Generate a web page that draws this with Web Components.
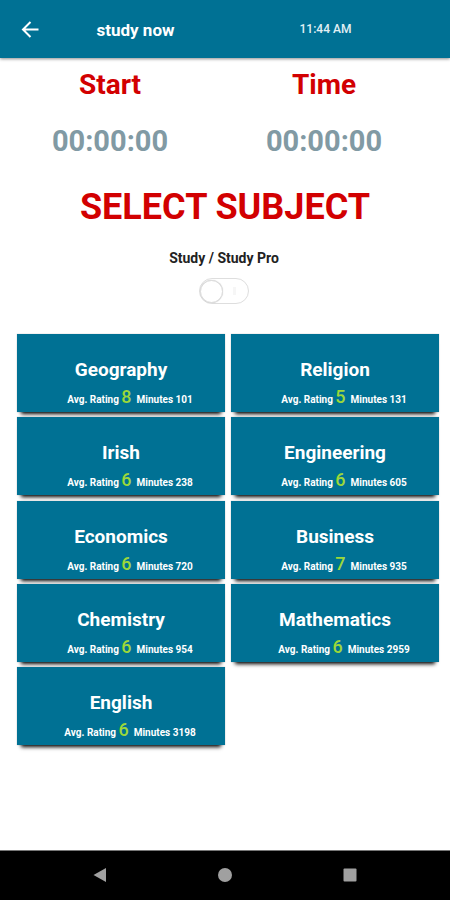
<!DOCTYPE html>
<html lang="en">
<head>
<meta charset="utf-8">
<meta name="viewport" content="width=device-width, initial-scale=1">
<title>study now</title>
<style>
  html, body { height: 100%; }
  body { margin: 0; background: #fff; font-family: Roboto, "Liberation Sans", sans-serif; }
</style>
</head>
<body>
<study-app></study-app>

<script>
const define = (name, html, setup) => {
  const template = document.createElement('template');
  template.innerHTML = html;
  customElements.define(name, class extends HTMLElement {
    constructor() {
      super();
      this.attachShadow({ mode: 'open' }).append(template.content.cloneNode(true));
    }
    connectedCallback() { if (setup) setup(this, this.shadowRoot); }
  });
};

define('app-bar', `
  <style>
    :host { display: grid; grid-template-columns: 60px 1fr 1fr 60px; align-items: center; height: 58px;
      background: #007194; color: #fff; box-shadow: 0 1px 3px rgba(0,0,0,.45); position: relative; }
    button { all: unset; display: grid; place-items: center; width: 60px; height: 58px; cursor: pointer; }
    svg { display: block; }
    h1 { margin: 0; padding: 2px 14px 0 0; font-size: 17px; line-height: 20px; font-weight: 700; text-align: center; }
    time { font-size: 12px; line-height: 16px; font-weight: 500; text-align: center; padding-left: 36px; color: #e2f0f4; }
  </style>
  <button aria-label="Back">
    <svg width="20" height="20" viewBox="0 0 20 20" fill="none" stroke="#fff" stroke-width="2">
      <path d="M18.5 10.500H3M10.500 3L3 10.500l7.500 7.500"/>
    </svg>
  </button>
  <h1><slot></slot></h1>
  <time><slot name="time"></slot></time>
`);

define('time-panel', `
  <style>
    :host { display: flex; flex-direction: column; align-items: center; }
    h2 { margin: 0; font-size: 28px; line-height: 36px; font-weight: 700; color: #d20001; }
    time { margin-top: 20px; font-size: 29px; line-height: 36px; font-weight: 700; color: #819aa4; }
  </style>
  <h2><slot></slot></h2>
  <time><slot name="value"></slot></time>
`);

define('mode-switch', `
  <style>
    :host { display: block; }
    label { display: flex; flex-direction: column; align-items: center; gap: 12px;
      font-size: 14px; line-height: 16px; font-weight: 700; color: #222; }
    input { appearance: none; box-sizing: border-box; display: flex; align-items: center; justify-content: space-between;
      width: 50px; height: 26px; margin: 0; padding-right: 12px; border: 1px solid #dedede; border-radius: 13px; background: #fff; cursor: pointer; }
    input::before { content: ""; box-sizing: border-box; width: 23px; height: 23px; border: 1px solid #dcdcdc; border-radius: 50%; background: #fff; box-shadow: 0 0 1px #ccc; }
    input::after { content: ""; width: 3px; height: 8px; background: #f6f6f6; }
    input:checked { flex-direction: row-reverse; padding: 0 0 0 12px; background: #b9dde8; }
  </style>
  <label><slot></slot><input type="checkbox" role="switch"></label>
`);

define('subject-card', `
  <style>
    :host { display: block; }
    button { appearance: none; display: flex; flex-direction: column; align-items: center; justify-content: flex-end; box-sizing: border-box;
      width: 100%; min-height: 78px; margin: 0; padding: 0; border: 0; background: #007194; color: #fff; font: inherit; cursor: pointer;
      box-shadow: 0 6px 4px -4px #000, 0 0 1px rgba(0,0,0,.3); }
    .name { font-size: 19px; line-height: 24px; font-weight: 700; }
    .stats { padding: 4px 0 0 18px; font-size: 10px; line-height: 24px; font-weight: 700; white-space: pre; }
    .rating { font-size: 18px; line-height: 22px; font-weight: 500; color: #9cd83a; }
  </style>
  <button><span class="name"><slot></slot></span><span class="stats">Avg. Rating <span class="rating"></span>  Minutes <span class="minutes"></span></span></button>
`, (host, root) => {
  root.querySelector('.rating').textContent = host.getAttribute('rating');
  root.querySelector('.minutes').textContent = host.getAttribute('minutes');
});

define('system-nav', `
  <style>
    :host { display: flex; justify-content: center; gap: 65px; padding-top: 6px; height: 43px; background: #000; border-top: 1px solid #777; }
    button { all: unset; width: 60px; height: 36px; display: grid; place-items: center; cursor: pointer; }
    svg { display: block; fill: #a0a0a0; }
  </style>
  <button aria-label="Back"><svg width="16" height="16" viewBox="0 0 16 16"><path d="M1.500 8L14 1v14z"/></svg></button>
  <button aria-label="Home"><svg width="16" height="16" viewBox="0 0 16 16"><circle cx="8" cy="8" r="7"/></svg></button>
  <button aria-label="Recent apps"><svg width="16" height="16" viewBox="0 0 16 16"><rect x="1.500" y="1.500" width="13" height="13" rx="1"/></svg></button>
`);

define('study-app', `
  <style>
    :host { display: flex; flex-direction: column; min-height: 100%; }
    main { flex: 1; }
    .times { display: grid; grid-template-columns: 1fr 1fr; padding: 9px 19px 0 3px; }
    h2 { margin: 26px 0 0; font-size: 36px; line-height: 44px; font-weight: 700; color: #d20001; text-align: center; }
    mode-switch { margin: 21px 2px 0 0; }
    .subjects { display: grid; grid-template-columns: 1fr 1fr; gap: 5px 6px; min-height: 411px; align-content: space-between; margin: 30px 11px 30px 17px; }
  </style>
  <app-bar>study now<span slot="time">11:44 AM</span></app-bar>
  <main>
    <div class="times">
      <time-panel>Start<span slot="value">00:00:00</span></time-panel>
      <time-panel>Time<span slot="value">00:00:00</span></time-panel>
    </div>
    <h2>SELECT SUBJECT</h2>
    <mode-switch>Study / Study Pro</mode-switch>
    <div class="subjects">
      <subject-card rating="8" minutes="101">Geography</subject-card>
      <subject-card rating="5" minutes="131">Religion</subject-card>
      <subject-card rating="6" minutes="238">Irish</subject-card>
      <subject-card rating="6" minutes="605">Engineering</subject-card>
      <subject-card rating="6" minutes="720">Economics</subject-card>
      <subject-card rating="7" minutes="935">Business</subject-card>
      <subject-card rating="6" minutes="954">Chemistry</subject-card>
      <subject-card rating="6" minutes="2959">Mathematics</subject-card>
      <subject-card rating="6" minutes="3198">English</subject-card>
    </div>
  </main>
  <system-nav></system-nav>
`);
</script>
</body>
</html>
